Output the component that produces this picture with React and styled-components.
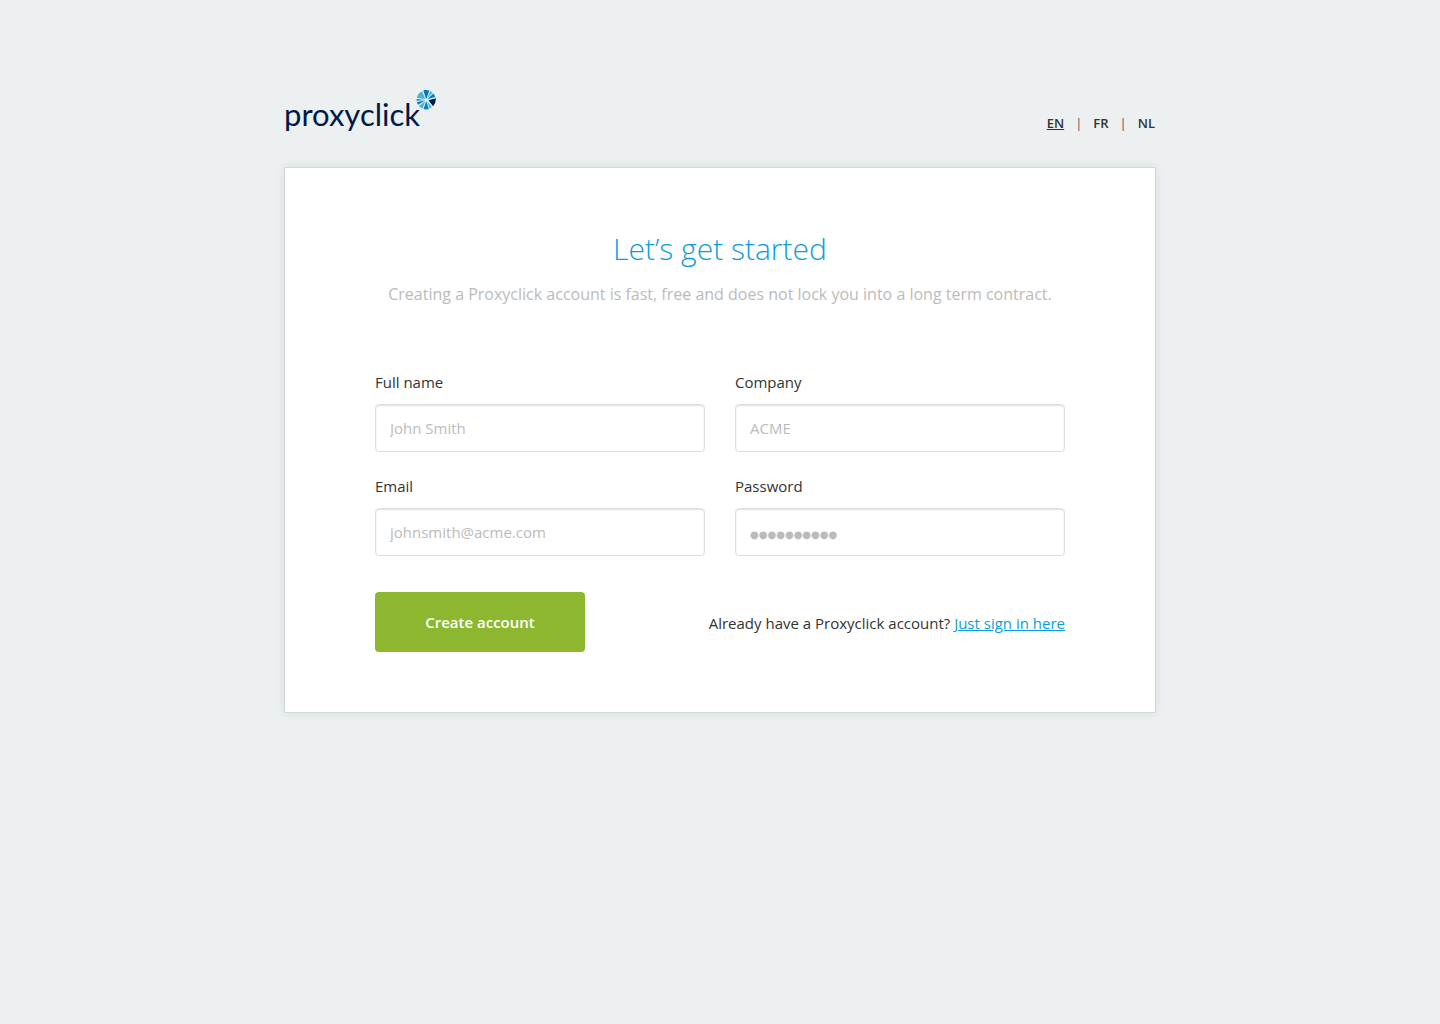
import React from "react";
import styled, { createGlobalStyle } from "styled-components";

const GlobalStyle = createGlobalStyle`
  *, *::before, *::after { box-sizing: border-box; }
  body {
    margin: 0;
    background: #ecf0f1;
    color: #333333;
    font-family: "Open Sans", sans-serif;
    font-size: 15px;
    line-height: 20px;
  }
`;

const Page = styled.div`
  width: 100%;
  max-width: 872px;
  margin: 0 auto;
  padding: 90px 0 60px;
`;

const Header = styled.header`
  display: flex;
  justify-content: space-between;
  align-items: flex-end;
`;

const Brand = styled.a`
  display: flex;
  align-items: flex-start;
  color: #001a48;
  text-decoration: none;
`;

const Wordmark = styled.span`
  padding-top: 4px;
  font-family: Lato, sans-serif;
  font-size: 31px;
  line-height: 40px;
`;

const Pinwheel = styled.svg`
  width: 20px;
  height: 20px;
  margin-left: -4px;
`;

const Languages = styled.nav`
  display: flex;
  gap: 11px;
  padding: 0 1px 1px 0;
  font-size: 13px;
`;

const Language = styled.a`
  color: #333333;
  font-weight: 600;
  text-decoration: ${(p) => (p.$active ? "underline" : "none")};
`;

const Divider = styled.span`
  color: #555555;
`;

const Card = styled.main`
  margin-top: 33px;
  padding: 60px 90px;
  background: #ffffff;
  border: 1px solid #d0d8da;
  box-shadow: 0 0 10px rgba(0, 0, 0, 0.08);
`;

const Title = styled.h1`
  margin: 0;
  color: #0b9ddb;
  font-size: 30px;
  font-weight: 300;
  line-height: 42px;
  text-align: center;
`;

const Intro = styled.p`
  margin: 14px 0 0;
  color: #bbbbbb;
  font-size: 16px;
  text-align: center;
`;

const Fields = styled.div`
  display: grid;
  grid-template-columns: repeat(auto-fit, minmax(260px, 1fr));
  gap: 24px 30px;
  margin-top: 68px;
`;

const Field = styled.div`
  display: flex;
  flex-direction: column;
  gap: 12px;
`;

const Label = styled.label`
  color: #333333;
`;

const Input = styled.input`
  width: 100%;
  height: 48px;
  padding: 0 14px;
  border: 1px solid #dddddd;
  border-radius: 4px;
  background: #ffffff;
  box-shadow: inset 0 1px 2px rgba(0, 0, 0, 0.12);
  color: #333333;
  font-family: inherit;
  font-size: 15px;

  &::placeholder {
    color: #bbbbbb;
    opacity: 1;
  }

  &[type="password"]::placeholder {
    font-family: "DejaVu Sans", sans-serif;
    font-size: 10px;
  }
`;

const Actions = styled.div`
  display: flex;
  flex-wrap: wrap;
  justify-content: space-between;
  align-items: center;
  gap: 20px;
  margin-top: 36px;
`;

const Submit = styled.button`
  min-width: 210px;
  height: 60px;
  border: 0;
  border-radius: 4px;
  background: #8cb72f;
  color: #ffffff;
  font-family: inherit;
  font-size: 15px;
  font-weight: 600;
  cursor: pointer;
`;

const SignIn = styled.p`
  margin: 0;
  padding-top: 2px;
`;

const SignInLink = styled.a`
  color: #0b9ddb;
`;

const fields = [
  { id: "name", label: "Full name", type: "text", placeholder: "John Smith" },
  { id: "company", label: "Company", type: "text", placeholder: "ACME" },
  { id: "email", label: "Email", type: "email", placeholder: "johnsmith@acme.com" },
  { id: "password", label: "Password", type: "password", placeholder: "●●●●●●●●●●" },
];

function Logo() {
  return (
    <Brand href="#home">
      <Wordmark>proxyclick</Wordmark>
      <Pinwheel viewBox="0 0 20 20" aria-hidden="true">
        <path fill="#45b8ce" d="M9.300 9 .8 8Q1.500 3.300 6.200 1.400Z" />
        <path fill="#0074bd" d="M10.200 9.300 7.300.3Q10.300-.3 13.300.5Z" />
        <path fill="#45b8ce" d="M11 8.600 14.300 1Q15.600 1.600 16.700 2.700Z" />
        <path fill="#0083ca" d="M11.300 9.300 17.300 3.600Q18.700 5 19.200 7Z" />
        <path fill="#001a48" d="M12.500 10.300 19.800 8.200Q20.200 13.100 17 16.200Z" />
        <path fill="#45b8ce" d="M11.200 11.300 15.900 16.900Q14.900 18 13.600 18.600Z" />
        <path fill="#0083ca" d="M10.300 11 12.800 19.100Q10 19.800 7.500 19.100Z" />
        <path fill="#45b8ce" d="M9.400 11.100 6.500 18.500Q4.300 17.500 2.900 15.900Z" />
        <path fill="#0083ca" d="M9 10.600 2.200 14.700Q1.200 13.400.9 11.900Z" />
        <path fill="#0083ca" d="M8.900 9.900.7 10.800Q.5 10 .6 9Z" />
      </Pinwheel>
    </Brand>
  );
}

export default function App() {
  return (
    <>
      <GlobalStyle />
      <Page>
        <Header>
          <Logo />
          <Languages aria-label="Language">
            <Language href="#en" $active aria-current="true">EN</Language>
            <Divider>|</Divider>
            <Language href="#fr">FR</Language>
            <Divider>|</Divider>
            <Language href="#nl">NL</Language>
          </Languages>
        </Header>
        <Card>
          <Title>Let’s get started</Title>
          <Intro>
            Creating a Proxyclick account is fast, free and does not lock you into a long term contract.
          </Intro>
          <form onSubmit={(event) => event.preventDefault()}>
            <Fields>
              {fields.map(({ id, label, type, placeholder }) => (
                <Field key={id}>
                  <Label htmlFor={id}>{label}</Label>
                  <Input id={id} name={id} type={type} placeholder={placeholder} />
                </Field>
              ))}
            </Fields>
            <Actions>
              <Submit type="submit">Create account</Submit>
              <SignIn>
                Already have a Proxyclick account? <SignInLink href="#signin">Just sign in here</SignInLink>
              </SignIn>
            </Actions>
          </form>
        </Card>
      </Page>
    </>
  );
}
